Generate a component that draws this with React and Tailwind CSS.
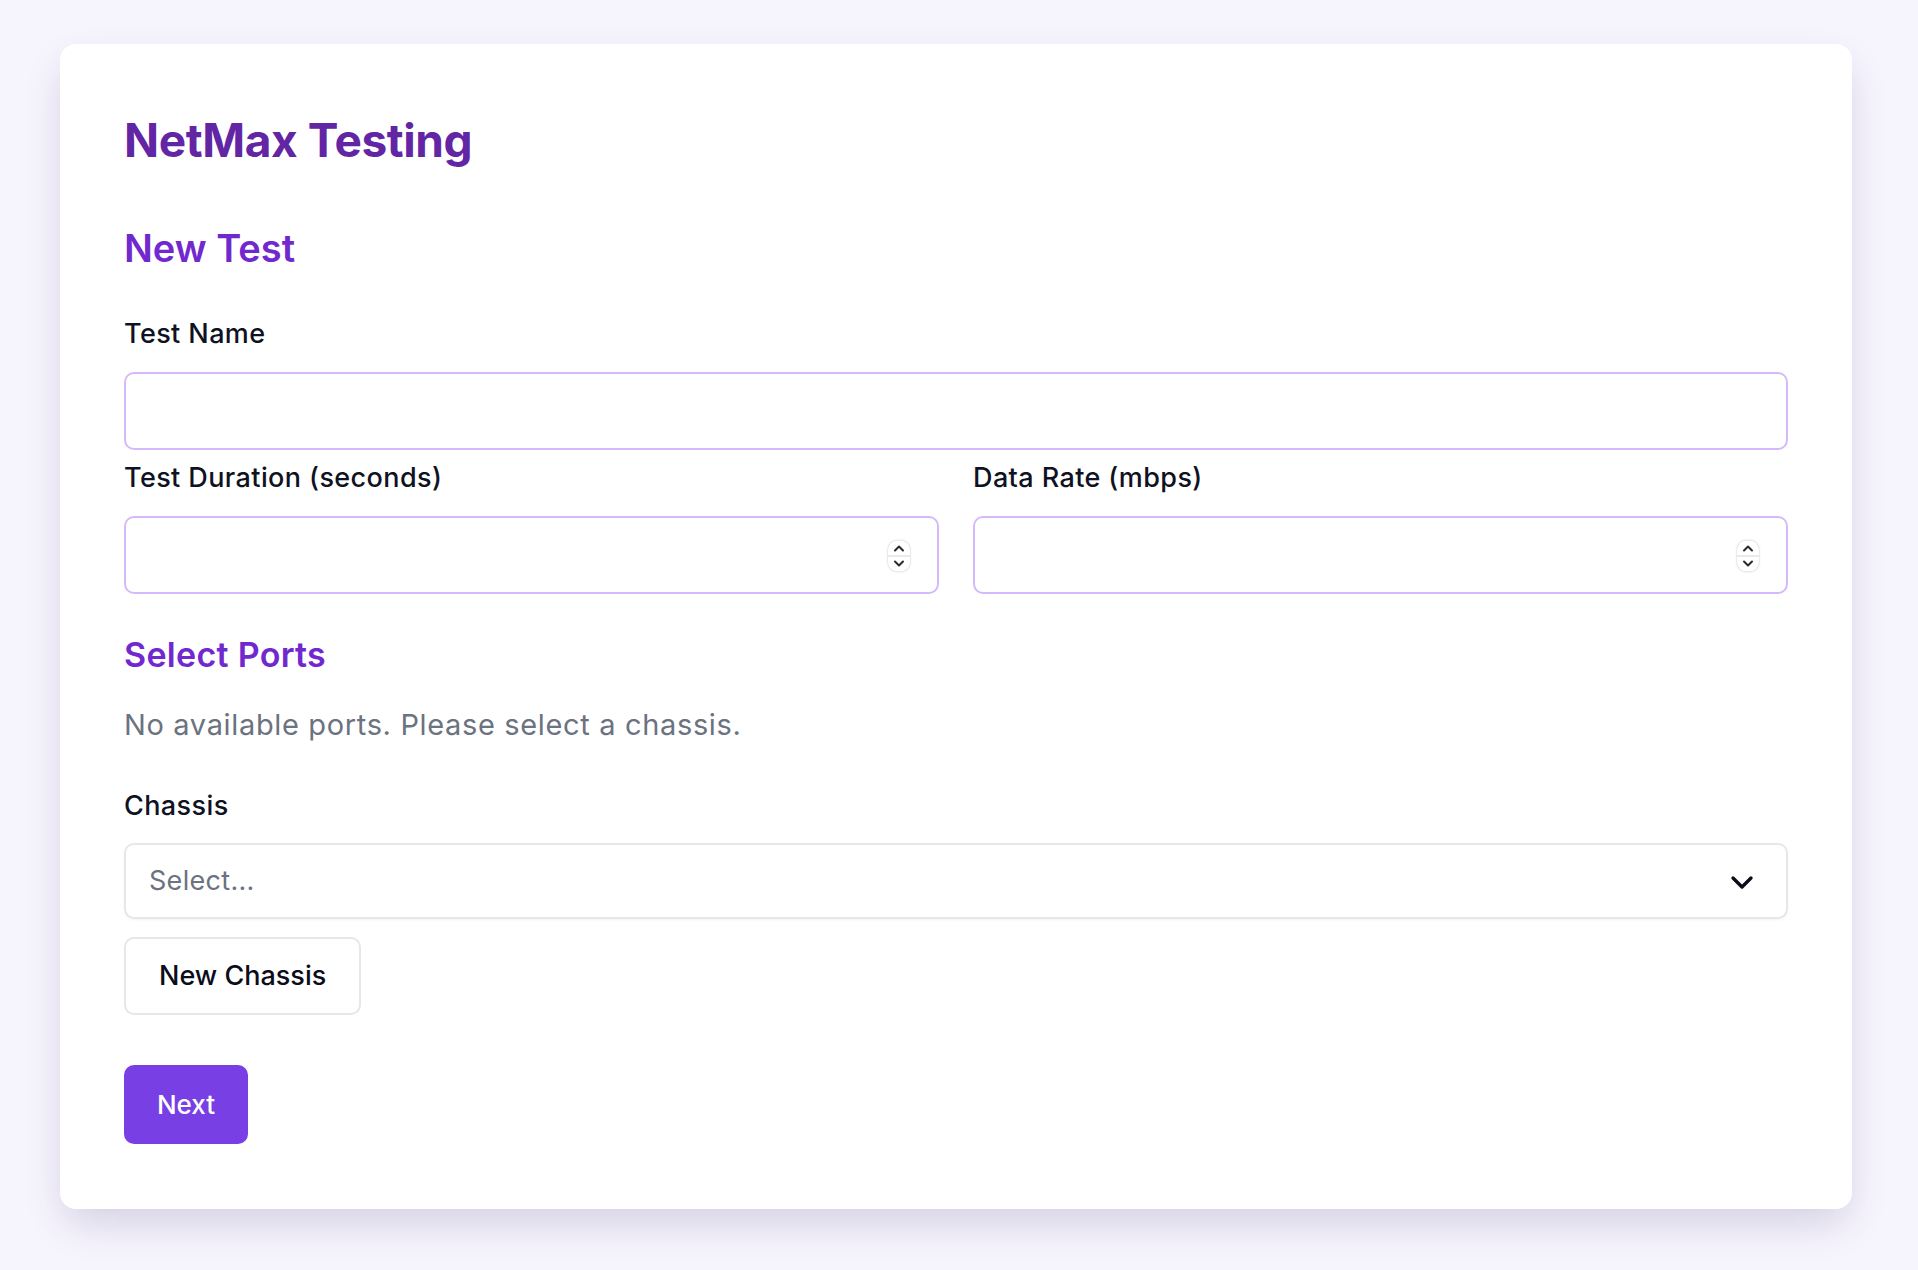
import React from "react";

// Safari-style stepper drawn over the number inputs
function Stepper() {
    return (
        <div className="absolute right-[29px] top-1/2 -translate-y-1/2 mt-[1px] flex h-[31px] w-[22px] flex-col items-center justify-between rounded-[9px] bg-white shadow-[0_0_2px_rgba(0,0,0,0.3)]">
            <svg width="22" height="15" viewBox="0 0 22 15">
                <polyline points="7,10 11,6 15,10" fill="none" stroke="#2b2b2b" strokeWidth="2" strokeLinecap="round" strokeLinejoin="round" />
            </svg>
            <div className="h-px w-full bg-[#d6d6d6]" />
            <svg width="22" height="15" viewBox="0 0 22 15">
                <polyline points="7,5 11,9 15,5" fill="none" stroke="#2b2b2b" strokeWidth="2" strokeLinecap="round" strokeLinejoin="round" />
            </svg>
        </div>
    );
}

function Label({ children, className = "" }) {
    return (
        <label className={"block text-[27px] leading-[26px] font-medium tracking-[0.4px] text-[#0f1222] " + className}>
            {children}
        </label>
    );
}

export default function App() {
    return (
        <div
            className="min-h-screen bg-[#f6f4fd] pt-[44px] pb-[62px] pl-[60px] pr-[66px]"
            style={{ fontFamily: "Inter, 'Noto Sans', sans-serif" }}
        >
            <div className="rounded-[16px] bg-white px-16 pt-[72px] pb-[65px] shadow-[0_18px_40px_-6px_rgba(70,55,110,0.2)]">
                <h1 className="text-[46px] leading-[48px] font-bold tracking-[-0.4px] text-[#6226a5]">NetMax Testing</h1>

                <h2 className="mt-[65px] text-[38px] leading-[38px] font-semibold text-[#7129cf]">New Test</h2>

                <Label className="mt-[54px]">Test Name</Label>
                <input
                    type="text"
                    className="mt-[25px] block h-[78px] w-full rounded-[10px] border-2 border-[#d5b9fb] px-5 text-[26px] outline-none"
                />

                <div className="mt-[15px] grid grid-cols-2 gap-x-[34px]">
                    <div>
                        <Label>Test Duration (seconds)</Label>
                        <div className="relative mt-[25px]">
                            <input
                                type="text"
                                inputMode="numeric"
                                className="block h-[78px] w-full rounded-[10px] border-2 border-[#d5b9fb] px-5 text-[26px] outline-none"
                            />
                            <Stepper />
                        </div>
                    </div>
                    <div>
                        <Label>Data Rate (mbps)</Label>
                        <div className="relative mt-[25px]">
                            <input
                                type="text"
                                inputMode="numeric"
                                className="block h-[78px] w-full rounded-[10px] border-2 border-[#d5b9fb] px-5 text-[26px] outline-none"
                            />
                            <Stepper />
                        </div>
                    </div>
                </div>

                <h2 className="mt-[44px] text-[34px] leading-[34px] font-semibold tracking-[0.3px] text-[#7129cf]">Select Ports</h2>

                <p className="mt-[38px] text-[29px] leading-[29px] tracking-[0.65px] text-[#6b7280]">
                    No available ports. Please select a chassis.
                </p>

                <Label className="mt-[54px]">Chassis</Label>
                <div className="mt-[24px] flex h-[76px] w-full items-center justify-between rounded-[10px] border-2 border-[#e6e6ec] pl-[23px] pr-[32px] shadow-[0_1px_3px_rgba(0,0,0,0.05)]">
                    <span className="text-[27px] tracking-[0.3px] text-[#6b7280]">Select...</span>
                    <svg width="24" height="15" viewBox="0 0 24 15" className="mt-[2px]">
                        <polyline points="3,3 12,12 21,3" fill="none" stroke="#0b0d1a" strokeWidth="3.4" strokeLinecap="round" strokeLinejoin="round" />
                    </svg>
                </div>

                <button className="mt-[18px] flex h-[78px] items-center rounded-[10px] border-2 border-[#e6e6ec] bg-white px-[33px] text-[27px] font-medium text-[#0b0d1a]">
                    New Chassis
                </button>

                <button className="mt-[50px] flex h-[79px] w-[124px] items-center justify-center rounded-[10px] bg-[#773fe4] text-[26px] font-medium text-white">
                    Next
                </button>
            </div>
        </div>
    );
}
